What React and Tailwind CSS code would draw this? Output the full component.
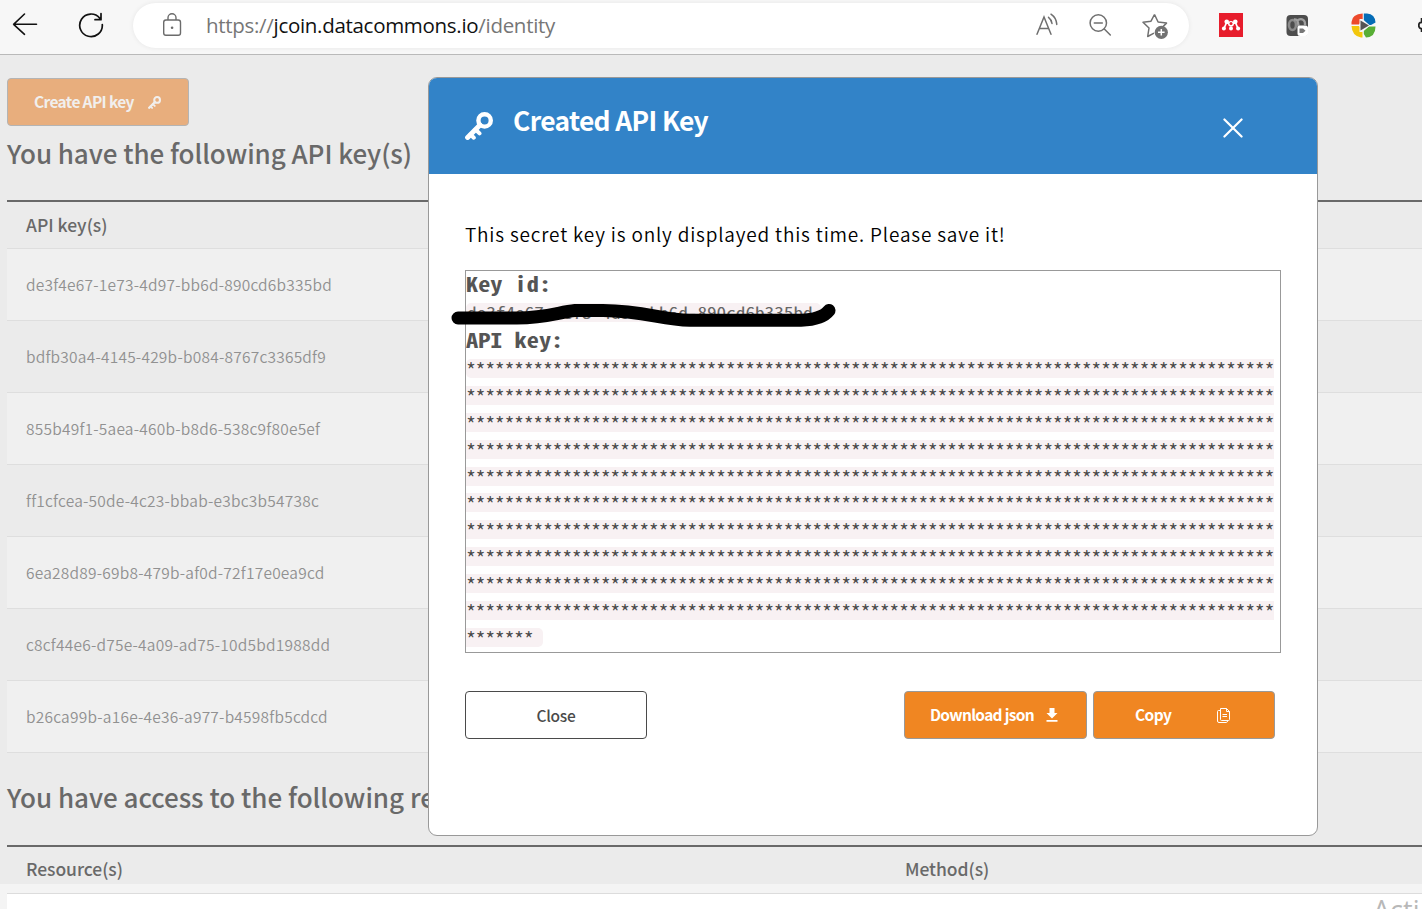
import React from "react";

const keys = [
  "de3f4e67-1e73-4d97-bb6d-890cd6b335bd",
  "bdfb30a4-4145-429b-b084-8767c3365df9",
  "855b49f1-5aea-460b-b8d6-538c9f80e5ef",
  "ff1cfcea-50de-4c23-bbab-e3bc3b54738c",
  "6ea28d89-69b8-479b-af0d-72f17e0ea9cd",
  "c8cf44e6-d75e-4a09-ad75-10d5bd1988dd",
  "b26ca99b-a16e-4e36-a977-b4598fb5cdcd",
];

const secretLines = Array.from({ length: 11 }, (_, i) => "*".repeat(i === 10 ? 7 : 84));

function KeyIcon({ className }) {
  return (
    <svg viewBox="0 0 28 28" className={className} fill="none" stroke="currentColor">
      <circle cx="19.600" cy="8.400" r="6.200" strokeWidth="4.400" />
      <path d="M15 13L2.600 25.400" strokeWidth="5" strokeLinecap="round" />
      <path d="M5.500 22.500l3.300 3.200M10.500 17.500l4 3.900" strokeWidth="4" strokeLinecap="round" />
    </svg>
  );
}

function Toolbar() {
  return (
    <header className="flex h-[55px] shrink-0 items-start border-b border-[#b9b9b9] bg-[#f7f7f7]">
      <svg className="ml-[12px] mt-[12px] h-[26px] w-[26px] shrink-0" viewBox="0 0 26 26" fill="none" stroke="#111" strokeWidth="1.6" strokeLinecap="round" strokeLinejoin="round">
        <path d="M24.500 12.300H1.600M12.500 2L1.600 12.300l10.900 10" />
      </svg>
      <svg className="ml-[40px] mt-[12px] h-[26px] w-[26px] shrink-0" viewBox="0 0 26 26" fill="none" stroke="#111" strokeWidth="1.7" strokeLinecap="round" strokeLinejoin="round">
        <path d="M24.300 12.500A11.300 11.300 0 1 1 21.800 6.200L23 7.600M23 1.500v6.200h-6" />
      </svg>
      <div className="ml-[29px] mt-[3px] flex h-[45px] w-[1056px] shrink-0 items-start rounded-full bg-white shadow-[0_0_5px_rgba(0,0,0,0.07)]">
        <svg className="ml-[29px] mt-[9px] h-[26px] w-[20px] shrink-0" viewBox="0 0 20 26" fill="none" stroke="#6b6b6b" strokeWidth="1.400">
          <rect x="1.700" y="8" width="16.800" height="15.300" rx="2.200" />
          <path d="M6 8V5.800a4 4 0 0 1 8 0V8" />
          <circle cx="10.100" cy="15.700" r="1.300" fill="#6b6b6b" stroke="none" />
        </svg>
        <div className="ml-[24px] mt-[6px] w-[720px] whitespace-nowrap font-['Open_Sans',sans-serif] text-[20.5px] leading-[32px] tracking-[-0.3px] text-[#767676]">
          https://<span className="text-[#111]">jcoin.datacommons.io</span>/identity
        </div>
        <svg className="ml-[109px] mt-[9px] h-[26px] w-[26px] shrink-0" viewBox="0 0 26 26" fill="none" stroke="#6f6f6f" strokeWidth="1.500" strokeLinecap="round">
          <path d="M2 22.300L9 5l7 17.300M4.300 16.500h9.400M13.500 5.300c2 1.500 3.200 3.500 3.500 6.200M16 2.200c3.400 2.300 5.500 5.700 5.800 10.200" />
        </svg>
        <svg className="ml-[26px] mt-[9px] h-[26px] w-[26px] shrink-0" viewBox="0 0 26 26" fill="none" stroke="#6f6f6f" strokeWidth="1.500" strokeLinecap="round">
          <circle cx="11.300" cy="11" r="8.200" />
          <path d="M17.300 17L23.300 23M7.300 11h8" />
        </svg>
        <svg className="ml-[28px] mt-[8px] h-[30px] w-[30px] shrink-0" viewBox="0 0 30 30" fill="none" stroke="#6f6f6f" strokeWidth="1.500" strokeLinejoin="round">
          <path d="M13.500 3.500l3.600 7.500 8.400 1.100-4.500 4.500M13 22.200L6.700 25.500l1.300-8.500-6-5.800 8-1 3.500-6.700" />
          <circle cx="20.300" cy="21.300" r="6.600" fill="#717171" stroke="none" />
          <path d="M17 21.300h6.600M20.300 18v6.600" stroke="#fff" />
        </svg>
      </div>
      <svg className="ml-[30px] mt-[13px] h-[24px] w-[24px] shrink-0" viewBox="0 0 24 24">
        <path fill="#e71d2c" d="M0 0h24v24H0z" />
        <path d="M5.200 15L7.600 9.500l4.400 2 4.400-2 2.400 5.500" fill="none" stroke="#fff" strokeWidth="1.700" />
        <g fill="#fff">
          <circle cx="7.700" cy="8.800" r="2.300" />
          <circle cx="16.300" cy="8.800" r="2.300" />
          <circle cx="4.900" cy="15.400" r="2" />
          <circle cx="12" cy="15.400" r="2" />
          <circle cx="19.100" cy="15.400" r="2" />
        </g>
        <circle cx="12" cy="10.800" r="2.900" fill="#fff" />
        <circle cx="12" cy="10.500" r="1.500" fill="#e71d2c" />
      </svg>
      <svg className="ml-[43px] mt-[14px] h-[23px] w-[23px] shrink-0" viewBox="0 0 23 23">
        <rect x="0.500" y="1" width="21.500" height="21" rx="4" fill="#4d4d4d" />
        <ellipse cx="6.500" cy="11" rx="3.500" ry="5" fill="none" stroke="#8b8b8b" strokeWidth="2.600" />
        <path d="M8 5.500c5-1 4 6 5 9M12 6c4-2 7.500 0 7 5" fill="none" stroke="#a0a0a0" strokeWidth="2.300" />
        <rect x="11.500" y="11.500" width="10.500" height="10.500" rx="2.500" fill="#fff" />
        <path d="M13.500 14.500h3.500l2.500 2.300-2.500 2.300h-3.500z" fill="#777" />
      </svg>
      <svg className="ml-[42px] mt-[13px] h-[25px] w-[25px] shrink-0" viewBox="0 0 25 25">
        <path d="M11.700.5v6L8 11.500H.5V9Q1 1 11.700.5" fill="#ed4a2c" />
        <path d="M12.800.5H16Q24 1 24.500 9.500L20 12h-3l-4.200-4z" fill="#056cb6" />
        <path d="M.5 13H8l3.500 4v7.500H10Q1 23 .5 13" fill="#f3c70c" />
        <path d="M24.500 13.500Q24.500 24 15 24.500L12.800 21v-3.500l5-4z" fill="#58ae35" />
        <path d="M8.500 6h3l7.500 6.500L11.500 19h-3z" fill="#f7f7f7" />
        <path d="M9.500 7.500l8.500 5-8.500 5z" fill="#555" />
      </svg>
      <svg className="ml-[42px] mt-[13px] h-[24px] w-[4px] shrink-0" viewBox="0 0 4 24" fill="none" stroke="#222" strokeWidth="1.800">
        <path d="M4 9.500C1.500 9 .8 10.500.8 12.500S2 16 4 15.500M3.600 5v4M3.600 15v4" />
      </svg>
    </header>
  );
}

function Dialog() {
  return (
    <section className="absolute left-[428px] top-[77px] flex h-[759px] w-[890px] flex-col overflow-hidden rounded-[9px] border border-[#999] bg-white">
      <div className="flex h-[96px] shrink-0 items-start bg-[#3283c8] text-white">
        <KeyIcon className="ml-[36px] mt-[34px] h-[28px] w-[28px]" />
        <h2 className="ml-[20px] mt-[22px] w-[196px] whitespace-nowrap text-[26.4px] font-bold leading-[39px] tracking-[-0.65px]">Created API Key</h2>
        <svg className="ml-[514px] mt-[40px] h-[20px] w-[20px]" viewBox="0 0 21 21" stroke="#fff" strokeWidth="2.300" strokeLinecap="round">
          <path d="M1.500 1.500l18 18M19.500 1.500l-18 18" />
        </svg>
      </div>
      <p className="ml-[36px] mt-[42px] h-[36px] shrink-0 whitespace-nowrap text-[19px] font-[350] leading-[36px] tracking-[0.820px] text-black">This secret key is only displayed this time. Please save it!</p>
      <div className="relative ml-[36px] mt-[18px] h-[383px] w-[816px] shrink-0 border border-[#999] font-['Noto_Sans_Mono_CJK_SC','Liberation_Mono',monospace] text-[#4a4a4a]">
        <div className="h-[28px] w-[85px] origin-left scale-x-[1.215] whitespace-nowrap text-[20px] font-bold leading-[26px] text-[#555]">Key id:</div>
        <div className="flex h-[28px] items-start pt-[4px]">
          <div className="h-[19px] w-[355px] rounded-[5px] bg-[#f8f1f3] pl-px">
            <span className="block w-[288px] origin-left scale-x-[1.2] whitespace-nowrap text-[16px] leading-[18px] text-[#666]">de3f4e67-1e73-4d97-bb6d-890cd6b335bd</span>
          </div>
        </div>
        <div className="h-[28px] w-[85px] origin-left scale-x-[1.215] whitespace-nowrap text-[20px] font-bold leading-[26px] text-[#555]">API key:</div>
        <div className="mt-[4px] flex flex-col items-start gap-[7.900px]">
          {secretLines.map((line, i) => (
            <div key={i} className={`h-[19px] whitespace-nowrap bg-[#f8f1f3] text-[20px] leading-[22px] tracking-[-0.380px] ${i === 10 ? "w-[77px] rounded-r-[5px]" : i === 0 ? "w-[808px] rounded-l-[5px]" : "w-[808px]"}`}>{line}</div>
          ))}
        </div>
        <svg className="absolute left-[-15px] top-[30px] h-[30px] w-[390px]" viewBox="0 0 390 30" fill="none" stroke="#000" strokeWidth="13" strokeLinecap="round" strokeLinejoin="round">
          <path d="M7 17H66C96 16.700 108 11 124 9.500H152C194 10 210 18.500 239 19.200H350Q371 18.500 378 9.500" />
        </svg>
      </div>
      <div className="mt-[38px] flex px-[36px] text-[15.500px] leading-[24px]">
        <button className="h-[48px] w-[182px] rounded-[4px] border border-[#4a4a4a] pb-px font-medium tracking-[-0.300px] text-[#4a4a4a]">Close</button>
        <button className="ml-[257px] flex h-[48px] w-[183px] items-center rounded-[4px] border border-[#999] bg-[#f08622] pl-[25px] font-bold tracking-[-0.700px] text-white">
          <span className="w-[105px] whitespace-nowrap pb-[2px] text-left">Download json</span>
          <svg className="ml-[11px] h-[16px] w-[12px]" viewBox="0 0 12 16" fill="#fff"><path d="M3.500 1h5v5h3L6 11.500.5 6h3zM.5 13h11v1.800H.5z" /></svg>
        </button>
        <button className="ml-[6px] flex h-[48px] w-[182px] items-center rounded-[4px] border border-[#999] bg-[#f08622] pl-[41px] font-bold tracking-[-0.600px] text-white">
          <span className="w-[40px] whitespace-nowrap pb-[2px] text-left">Copy</span>
          <svg className="ml-[42px] h-[15px] w-[13px]" viewBox="0 0 13 15" fill="none" stroke="#fff" strokeWidth="1"><path d="M3.500.5h6l3 3v8q0 1-1 1h-7q-1 0-1-1zM9.500.500v3h3M5.500 6.500h4.500M5.500 8.500h4.500M3.500 2.500H1.500q-1 0-1 1v9.500q0 1.500 1.500 1.500H9.500q1 0 1-2" /></svg>
        </button>
      </div>
    </section>
  );
}

export default function App() {
  return (
    <div className="relative flex h-[909px] w-[1422px] flex-col overflow-hidden bg-[#ebebeb] font-['Noto_Sans_CJK_SC',sans-serif] text-[#696969]">
      <Toolbar />
      <main className="flex flex-1 flex-col">
        <button className="ml-[7px] mt-[23px] flex h-[48px] w-[182px] shrink-0 items-center rounded-[4px] border border-[#b4b4b4] bg-[#e8ae7d] pl-[26px] text-[15.500px] font-bold tracking-[-0.650px] text-[#f1efed]">
          <span className="w-[100px] whitespace-nowrap text-left">Create API key</span>
          <KeyIcon className="ml-[14px] h-[13px] w-[13px]" />
        </button>
        <h1 className="ml-[7px] mt-[8px] h-[40px] shrink-0 whitespace-nowrap text-[26px] font-medium leading-[37px] tracking-[-0.060px]">You have the following API key(s)</h1>
        <div className="ml-[7px] mt-[26px] shrink-0 border-t-2 border-[#696969]">
          <div className="h-[47px] border-b border-[#dedede] pl-[19px] text-[17.500px] font-medium leading-[46px]">API key(s)</div>
          {keys.map((id) => (
            <div key={id} className="h-[72px] border-b border-[#dedede] pl-[19px] text-[15.500px] font-[350] leading-[71px] tracking-[0.220px] text-[#919191] odd:bg-[#ebebeb] even:bg-[#f0f0f0]">{id}</div>
          ))}
        </div>
        <h1 className="ml-[7px] mt-[25px] h-[40px] shrink-0 whitespace-nowrap text-[26px] font-medium leading-[37px] tracking-[-0.020px]">You have access to the following resource(s)</h1>
        <div className="ml-[7px] mt-[27px] flex h-[39px] shrink-0 border-t-2 border-[#696969] text-[17.500px] font-medium leading-[44px] tracking-[-0.060px]">
          <div className="w-[879px] pl-[19px]">Resource(s)</div>
          <div className="pl-[19px]">Method(s)</div>
        </div>
        <div className="h-[25px] shrink-0 bg-[#f4f4f4] pl-[7px] pt-[9px]">
          <div className="flex h-[16px] justify-end overflow-hidden border-t border-[#dcdcdc] bg-white">
            <span className="w-[49px] whitespace-nowrap font-['Open_Sans',sans-serif] text-[27px] leading-[31px] text-[#b8b8b8]">Acti</span>
          </div>
        </div>
      </main>
      <Dialog />
    </div>
  );
}
